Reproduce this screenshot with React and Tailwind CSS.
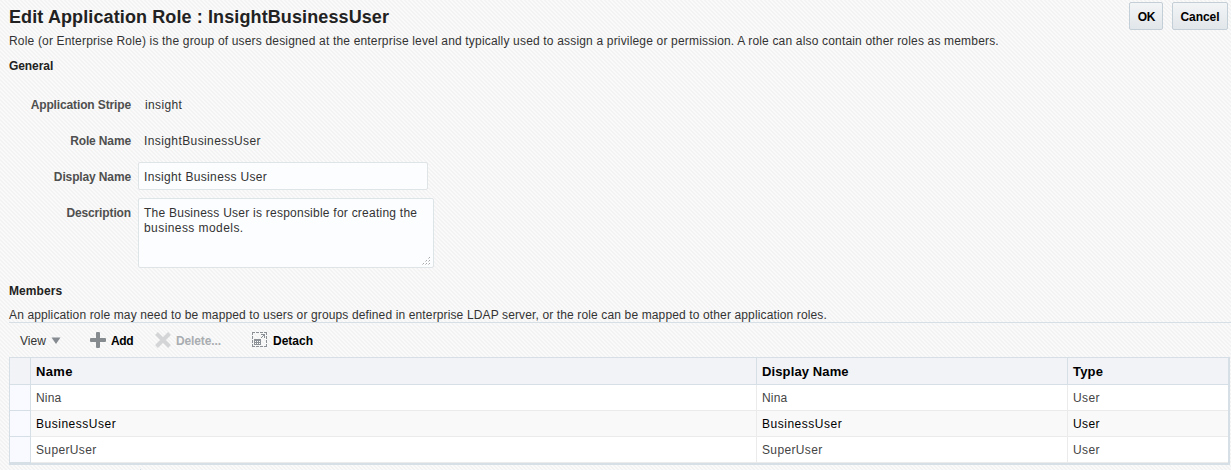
import React from "react";

const members = [
  { name: "Nina", display: "Nina", type: "User", tracking: "tracking-[0.2px]" },
  { name: "BusinessUser", display: "BusinessUser", type: "User", active: true, tracking: "tracking-[0.52px]" },
  { name: "SuperUser", display: "SuperUser", type: "User", tracking: "tracking-[0.35px]" },
];

function Field({ label, className, children }) {
  return (
    <div className={`flex ${className}`}>
      <div className="w-[131px] shrink-0 text-right font-bold tracking-[-0.13px] text-[#4f4f4f]">{label}</div>
      {children}
    </div>
  );
}

function DetachIcon() {
  return (
    <svg width="16" height="16" viewBox="0 0 16 16" fill="none" shapeRendering="crispEdges">
      <path d="M0 .5h3M4 .5h3M8 .5h3M12 .5h3M0 14.5h3M4 14.5h3M8 14.5h3M12 14.5h3M.5 0v3M.5 4v3M.5 8v3M.5 12v3M14.5 0v3M14.5 4v3M14.5 8v3M14.5 12v3" stroke="#8b9196" />
      <path d="M2 7h7v6H2z" fill="#8b9196" />
      <path d="M3 9h1v1H3zM5 9h1v1H5zM7 9h1v1H7zM3 11h1v1H3zM5 11h1v1H5zM7 11h1v1H7z" fill="#fff" />
      <path d="M9 2h4v4h-1V4h-1v1h-1v1H9V5h1V4h1V3H9z" fill="#8b9196" />
    </svg>
  );
}

export default function App() {
  return (
    <div className="h-[470px] w-[1231px] overflow-hidden bg-[#f8f8f8] bg-[linear-gradient(45deg,#f3f3f3_0%,#f3f3f3_12.5%,#fafafa_12.5%,#fafafa_37.5%,#f3f3f3_37.5%,#f3f3f3_62.5%,#fafafa_62.5%,#fafafa_87.5%,#f3f3f3_87.5%)] bg-[length:4px_4px] font-['Liberation_Sans',Arial,sans-serif] text-[12px] leading-[15px] whitespace-nowrap text-[#333]">
      <header className="flex h-[34px] justify-between pr-[3px] pl-[9px]">
        <h1 className="pt-[6px] text-[18px] leading-[22px] font-bold tracking-[0.11px] text-[#222]">Edit Application Role : InsightBusinessUser</h1>
        <div className="flex gap-[9px] pt-[2px] font-bold text-black">
          <button className="h-[28px] w-[34px] rounded-[2px] border border-[#c4ced7] bg-linear-to-b from-[#f3f5f6] to-[#e1e6ea] pt-[2px] pl-px tracking-[-0.2px]">OK</button>
          <button className="h-[28px] w-[56px] rounded-[2px] border border-[#c4ced7] bg-linear-to-b from-[#f3f5f6] to-[#e1e6ea] pt-[2px] tracking-[-0.05px]">Cancel</button>
        </div>
      </header>
      <p className="pl-[9px] tracking-[0.174px]">Role (or Enterprise Role) is the group of users designed at the enterprise level and typically used to assign a privilege or permission. A role can also contain other roles as members.</p>
      <h2 className="pt-[10px] pl-[9px] font-bold tracking-[-0.08px] text-[#222]">General</h2>

      <section className="h-[210px] pt-[24px]">
        <Field label="Application Stripe" className="h-[36px]">
          <div className="pl-[14px] tracking-[0.35px]">insight</div>
        </Field>
        <Field label="Role Name" className="h-[28px]">
          <div className="pl-[13px] tracking-[0.4px]">InsightBusinessUser</div>
        </Field>
        <Field label="Display Name" className="h-[36px] [&>div:first-child]:pt-[8px]">
          <div className="ml-[7px] h-[28px] w-[290px] rounded-[2px] border border-[#dfe4e7] bg-[#fcfdff] pt-[7px] pl-[5px] tracking-[0.34px]">Insight Business User</div>
        </Field>
        <Field label="Description" className="[&>div:first-child]:pt-[8px]">
          <div className="ml-[7px] flex h-[70px] w-[296px] justify-between rounded-[2px] border border-[#dfe4e7] bg-[#fcfdff] pt-[7px] pl-[5px]">
            <div>
              <div className="tracking-[0.24px]">The Business User is responsible for creating the</div>
              <div className="tracking-[0.43px]">business models.</div>
            </div>
            <svg width="8" height="8" viewBox="0 0 8 8" className="mr-[3px] mb-[2px] self-end" fill="#a8a8a8" shapeRendering="crispEdges">
              <path d="M7 0h1v1H7zM4 3h1v1H4zM7 3h1v1H7zM1 6h1v1H1zM4 6h1v1H4zM7 6h1v1H7z" />
              <path d="M6 1h1v1H6zM3 4h1v1H3zM6 4h1v1H6zM0 7h1v1H0zM3 7h1v1H3zM6 7h1v1H6z" fill="#d0d0d0" />
            </svg>
          </div>
        </Field>
      </section>

      <section>
        <h2 className="pl-[9px] font-bold tracking-[0.08px] text-[#222]">Members</h2>
        <p className="ml-[9px] h-[24px] border-b border-[#d6dfe6] pt-[9px] tracking-[0.132px]">An application role may need to be mapped to users or groups defined in enterprise LDAP server, or the role can be mapped to other application roles.</p>
        <div className="flex h-[34px] items-center pl-[20px] font-bold text-black [&_span]:pt-[2px]">
          <div className="flex w-[70px] items-center gap-[5px] font-normal text-[#333]">
            <span>View</span>
            <svg width="10" height="7" viewBox="0 0 10 7" className="mt-px" fill="#858b90"><path d="M0.5 0.5h9L5 7z" /></svg>
          </div>
          <div className="flex w-[65px] items-center gap-[5px]">
            <svg width="16" height="16" viewBox="0 0 16 16" fill="#858b8e"><path d="M6 1a1 1 0 0 1 1-1h2a1 1 0 0 1 1 1v5h5a1 1 0 0 1 1 1v2a1 1 0 0 1-1 1h-5v5a1 1 0 0 1-1 1H7a1 1 0 0 1-1-1v-5H1a1 1 0 0 1-1-1V7a1 1 0 0 1 1-1h5z" /></svg>
            <span className="tracking-[-0.4px]">Add</span>
          </div>
          <div className="flex w-[97px] items-center gap-[5px] text-[#a9adb1]">
            <svg width="16" height="16" viewBox="0 0 16 16"><path d="M1.5 1.5l13 13M14.5 1.5l-13 13" stroke="#d3d5d6" strokeWidth="4" /></svg>
            <span className="tracking-[-0.12px]">Delete...</span>
          </div>
          <div className="flex items-center gap-[5px]">
            <DetachIcon />
            <span>Detach</span>
          </div>
        </div>
        <div className="ml-[9px] w-[1221px] border-t border-r-2 border-b-2 border-l border-[#d6dfe6]">
          <div className="grid h-[27px] grid-cols-[21px_726px_311px_1fr] border-b border-[#d6dfe6] bg-[#f1f3f7] text-[13px] leading-[28px] font-bold text-black">
            <div className="border-r border-[#d6dfe6]" />
            <div className="border-r border-[#d6dfe6] pl-[5px] tracking-[0.35px]">Name</div>
            <div className="border-r border-[#d6dfe6] pl-[5px] tracking-[0.12px]">Display Name</div>
            <div className="pl-[5px] tracking-[0.2px]">Type</div>
          </div>
          {members.map((m) => (
            <div key={m.name} className={`grid h-[26px] grid-cols-[21px_726px_311px_1fr] leading-[27px] ${m.active ? "bg-[#f9f9f9] text-black" : "bg-white text-[#444]"}`}>
              <div className="h-[26px] border-r border-b border-[#d6dfe6] bg-[#f8faff]" />
              <div className={`h-[26px] border-r border-b border-[#ebebeb] pl-[5px] ${m.tracking}`}>{m.name}</div>
              <div className={`h-[26px] border-r border-b border-[#ebebeb] pl-[5px] ${m.tracking}`}>{m.display}</div>
              <div className="h-[26px] border-b border-[#ebebeb] pl-[5px] tracking-[0.4px]">{m.type}</div>
            </div>
          ))}
        </div>
        <div className="ml-[140px] h-[8px] pt-[4px]"><div className="h-[2px] w-px bg-[#d6dfe6]" /></div>
      </section>
    </div>
  );
}
